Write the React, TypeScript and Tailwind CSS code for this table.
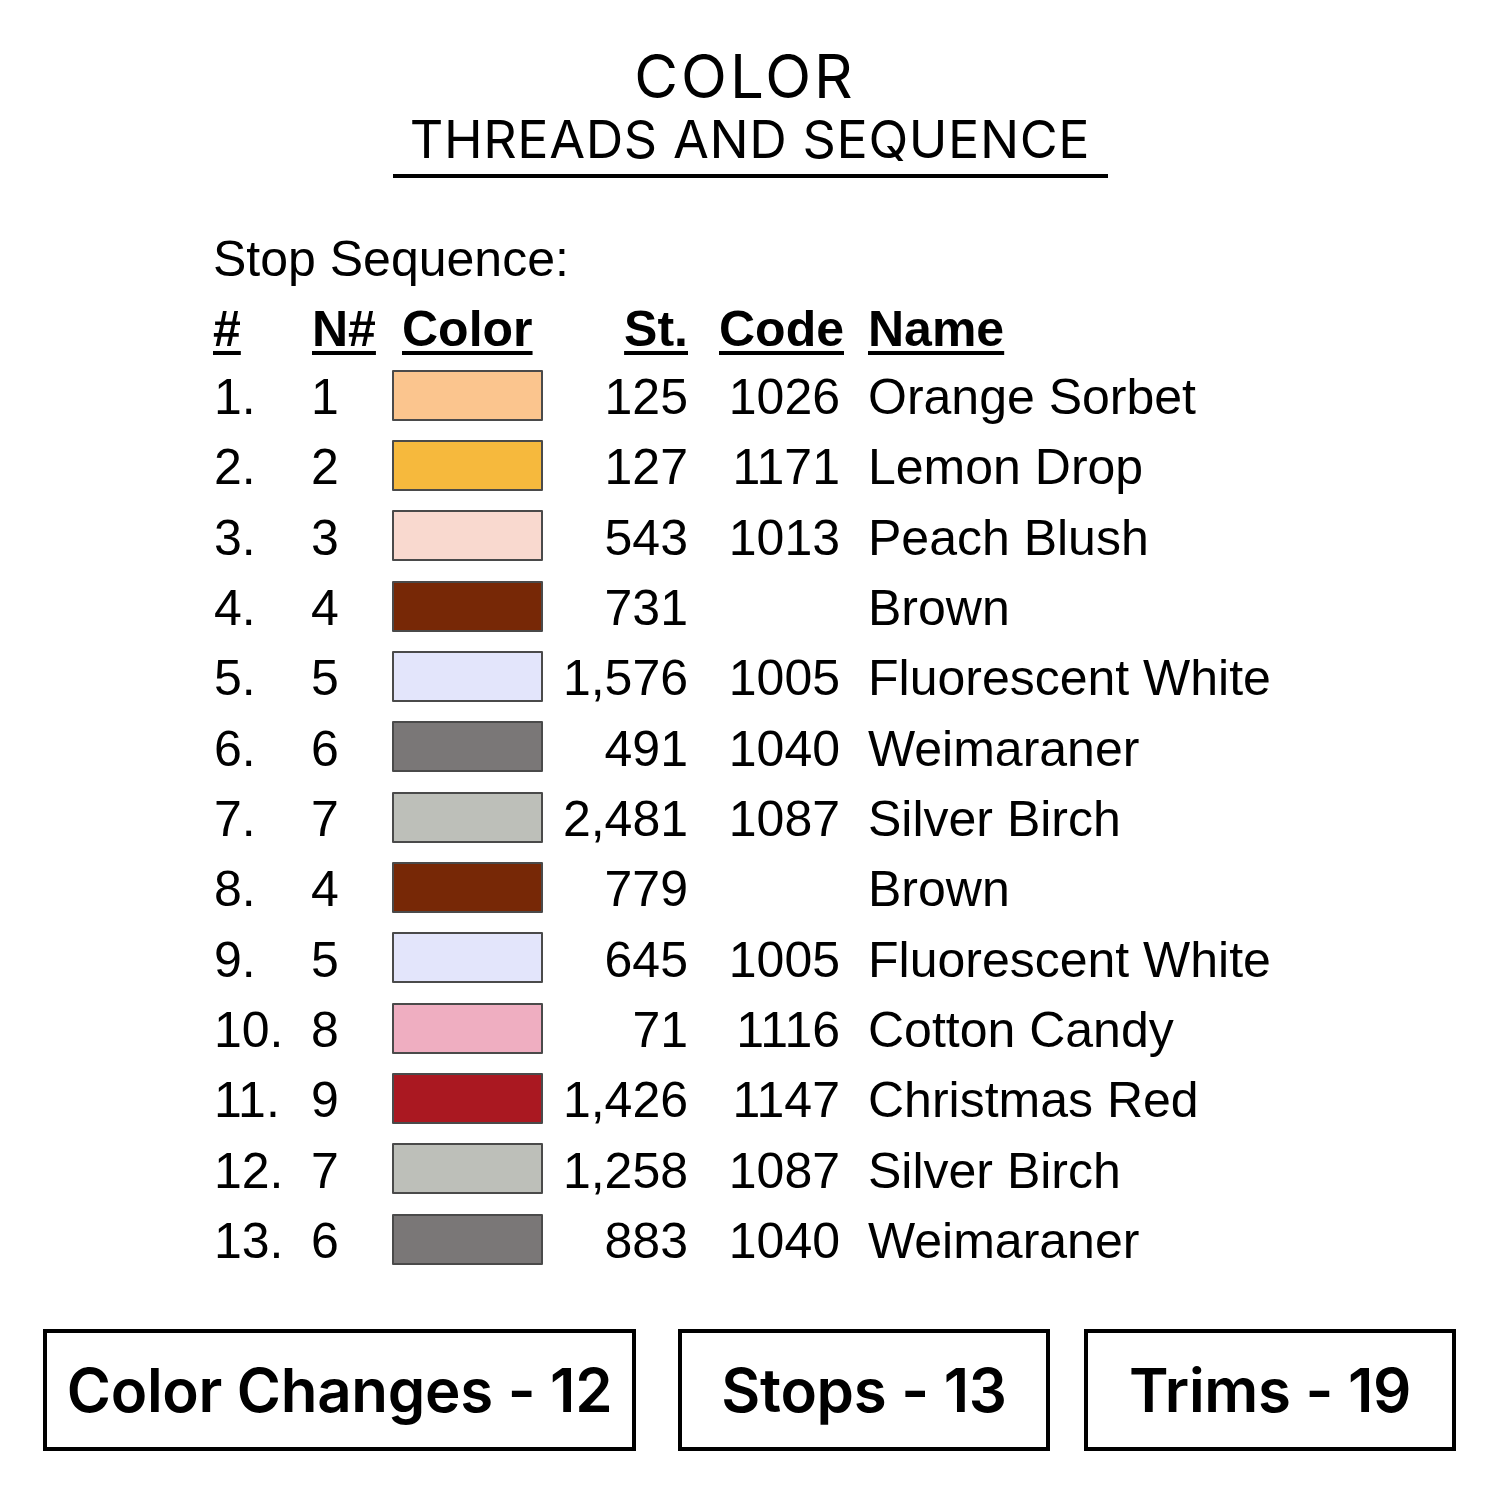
import React from "react";

const rows = [
  { n: "1.", k: "1", color: "#fbc58e", st: "125", code: "1026", name: "Orange Sorbet" },
  { n: "2.", k: "2", color: "#f6b93d", st: "127", code: "1171", name: "Lemon Drop" },
  { n: "3.", k: "3", color: "#f9d9cf", st: "543", code: "1013", name: "Peach Blush" },
  { n: "4.", k: "4", color: "#772806", st: "731", code: "", name: "Brown" },
  { n: "5.", k: "5", color: "#e3e5fb", st: "1,576", code: "1005", name: "Fluorescent White" },
  { n: "6.", k: "6", color: "#7a7777", st: "491", code: "1040", name: "Weimaraner" },
  { n: "7.", k: "7", color: "#bdbfb9", st: "2,481", code: "1087", name: "Silver Birch" },
  { n: "8.", k: "4", color: "#772806", st: "779", code: "", name: "Brown" },
  { n: "9.", k: "5", color: "#e3e5fb", st: "645", code: "1005", name: "Fluorescent White" },
  { n: "10.", k: "8", color: "#efaec1", st: "71", code: "1116", name: "Cotton Candy" },
  { n: "11.", k: "9", color: "#aa1821", st: "1,426", code: "1147", name: "Christmas Red" },
  { n: "12.", k: "7", color: "#bdbfb9", st: "1,258", code: "1087", name: "Silver Birch" },
  { n: "13.", k: "6", color: "#7a7777", st: "883", code: "1040", name: "Weimaraner" },
];

const arial = "font-['Liberation_Sans',Arial,sans-serif]";
const geo = "font-['Inter','DejaVu_Sans',sans-serif]";

function StatBox({ label, width }: { label: string; width: string }) {
  return (
    <div className={`${width} h-[122px] border-[4px] border-black flex items-center justify-center`}>
      <span className={`${geo} font-semibold text-[60px] leading-none text-black tracking-[-0.3px]`}>{label}</span>
    </div>
  );
}

export default function App() {
  return (
    <div className="w-[1500px] h-[1500px] bg-white flex flex-col text-black">
      {/* title */}
      <div className="flex flex-col items-center pt-[46px]">
        <h1 className={`${geo} font-normal text-[60px] leading-[60px] tracking-[3px] pr-[10px]`}>COLOR</h1>
        <div className="w-[715px] border-b-[4px] border-black flex justify-center pb-[8px] mt-[8px]">
          <span className={`${geo} font-normal text-[52px] leading-[52px] tracking-[0.6px]`}>THREADS AND SEQUENCE</span>
        </div>
      </div>

      {/* stop sequence table */}
      <div className={`${arial} pl-[213px] mt-[46px] text-[50px]`}>
        <div className="h-[70px] leading-[70px]">Stop Sequence:</div>
        <div className="flex h-[68px] leading-[70px] font-bold underline decoration-[4px] underline-offset-[5px]">
          <div className="w-[97px]">#</div>
          <div className="w-[82px] pl-[2px]">N#</div>
          <div className="w-[151px] pl-[10px]">Color</div>
          <div className="w-[145px] text-right">St.</div>
          <div className="w-[156px] text-right">Code</div>
          <div className="pl-[24px]">Name</div>
        </div>
        {rows.map((r, i) => (
          <div key={i} className="flex items-center h-[70.33px] leading-[70px]">
            <div className="w-[97px] pl-[1px]">{r.n}</div>
            <div className="w-[82px] pl-[1px]">{r.k}</div>
            <div className="w-[151px] flex mb-[4px]">
              <div
                className="w-[151px] h-[51px] border-2 border-[#4a4a4a] rounded-[1px]"
                style={{ backgroundColor: r.color }}
              />
            </div>
            <div className="w-[145px] text-right">{r.st}</div>
            <div className="w-[152px] text-right">{r.code}</div>
            <div className="pl-[28px]">{r.name}</div>
          </div>
        ))}
      </div>

      {/* totals */}
      <div className="flex pl-[43px] mt-[53px]">
        <StatBox label="Color Changes - 12" width="w-[593px]" />
        <div className="w-[42px]" />
        <StatBox label="Stops - 13" width="w-[372px]" />
        <div className="w-[34px]" />
        <StatBox label="Trims - 19" width="w-[372px]" />
      </div>
    </div>
  );
}
